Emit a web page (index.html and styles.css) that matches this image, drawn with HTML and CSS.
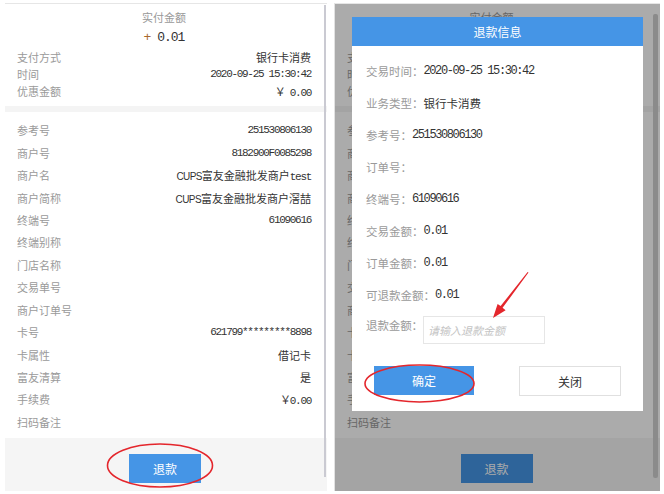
FILE: index.html
```html
<!DOCTYPE html>
<html lang="zh-CN">
<head>
<meta charset="utf-8">
<title>退款</title>
<link rel="stylesheet" href="styles.css">
</head>
<body>
<div class="page">
  <section class="screen">
    <div class="summary">
      <div class="paid-title">实付金额</div>
      <div class="paid-amount"><span class="plus">+</span> 0.01</div>
      <div class="row small"><span class="k">支付方式</span><span class="v">银行卡消费</span></div>
      <div class="row small"><span class="k">时间</span><span class="v num">2020-09-25 15:30:42</span></div>
      <div class="row small"><span class="k">优惠金额</span><span class="v num">￥ 0.00</span></div>
    </div>
    <div class="band"></div>
    <div class="details">
      <div class="row"><span class="k">参考号</span><span class="v num">251530806130</span></div>
      <div class="row"><span class="k">商户号</span><span class="v num">8182900F0085298</span></div>
      <div class="row"><span class="k">商户名</span><span class="v"><span class="narrow">CUPS</span>富友金融批发商户<span class="num">test</span></span></div>
      <div class="row"><span class="k">商户简称</span><span class="v"><span class="narrow">CUPS</span>富友金融批发商户滘喆</span></div>
      <div class="row"><span class="k">终端号</span><span class="v num">61090616</span></div>
      <div class="row"><span class="k">终端别称</span><span class="v"></span></div>
      <div class="row"><span class="k">门店名称</span><span class="v"></span></div>
      <div class="row"><span class="k">交易单号</span><span class="v"></span></div>
      <div class="row"><span class="k">商户订单号</span><span class="v"></span></div>
      <div class="row"><span class="k">卡号</span><span class="v num">621799*********8898</span></div>
      <div class="row"><span class="k">卡属性</span><span class="v">借记卡</span></div>
      <div class="row"><span class="k">富友清算</span><span class="v">是</span></div>
      <div class="row"><span class="k">手续费</span><span class="v num">￥0.00</span></div>
      <div class="row"><span class="k">扫码备注</span><span class="v"></span></div>
    </div>
    <div class="footer"><button class="btn-refund">退款</button></div>
    <div class="scrollbar"></div>
  </section>

  <section class="screen right">
    <div class="summary">
      <div class="paid-title">实付金额</div>
      <div class="paid-amount"><span class="plus">+</span> 0.01</div>
      <div class="row small"><span class="k">支付方式</span><span class="v">银行卡消费</span></div>
      <div class="row small"><span class="k">时间</span><span class="v num">2020-09-25 15:30:42</span></div>
      <div class="row small"><span class="k">优惠金额</span><span class="v num">￥ 0.00</span></div>
    </div>
    <div class="band"></div>
    <div class="details">
      <div class="row"><span class="k">参考号</span><span class="v num">251530806130</span></div>
      <div class="row"><span class="k">商户号</span><span class="v num">8182900F0085298</span></div>
      <div class="row"><span class="k">商户名</span><span class="v"><span class="narrow">CUPS</span>富友金融批发商户<span class="num">test</span></span></div>
      <div class="row"><span class="k">商户简称</span><span class="v"><span class="narrow">CUPS</span>富友金融批发商户滘喆</span></div>
      <div class="row"><span class="k">终端号</span><span class="v num">61090616</span></div>
      <div class="row"><span class="k">终端别称</span><span class="v"></span></div>
      <div class="row"><span class="k">门店名称</span><span class="v"></span></div>
      <div class="row"><span class="k">交易单号</span><span class="v"></span></div>
      <div class="row"><span class="k">商户订单号</span><span class="v"></span></div>
      <div class="row"><span class="k">卡号</span><span class="v num">621799*********8898</span></div>
      <div class="row"><span class="k">卡属性</span><span class="v">借记卡</span></div>
      <div class="row"><span class="k">富友清算</span><span class="v">是</span></div>
      <div class="row"><span class="k">手续费</span><span class="v num">￥0.00</span></div>
      <div class="row"><span class="k">扫码备注</span><span class="v"></span></div>
    </div>
    <div class="footer"><button class="btn-refund">退款</button></div>
    <div class="scrollbar wide"></div>
    <div class="mask"></div>

    <div class="modal">
      <div class="modal-head">退款信息</div>
      <div class="modal-body">
        <div class="mrow"><span class="mk">交易时间：</span><span class="mv num">2020-09-25 15:30:42</span></div>
        <div class="mrow"><span class="mk">业务类型：</span><span class="mv">银行卡消费</span></div>
        <div class="mrow"><span class="mk">参考号：</span><span class="mv num">251530806130</span></div>
        <div class="mrow"><span class="mk">订单号：</span><span class="mv"></span></div>
        <div class="mrow"><span class="mk">终端号：</span><span class="mv num">61090616</span></div>
        <div class="mrow"><span class="mk">交易金额：</span><span class="mv num">0.01</span></div>
        <div class="mrow"><span class="mk">订单金额：</span><span class="mv num">0.01</span></div>
        <div class="mrow"><span class="mk">可退款金额：</span><span class="mv num">0.01</span></div>
        <div class="input-row">
          <span class="mk input-label">退款金额：</span>
          <input class="amount-input" type="text" placeholder="请输入退款金额">
        </div>
        <div class="actions">
          <button class="btn-ok">确定</button>
          <button class="btn-close">关闭</button>
        </div>
      </div>
    </div>
  </section>
</div>

<svg class="annotations" width="664" height="494" viewBox="0 0 664 494">
  <ellipse cx="160" cy="465.5" rx="52.5" ry="21.5" fill="none" stroke="#e4262c" stroke-width="1.6"/>
  <ellipse cx="419.5" cy="383.5" rx="54.5" ry="18.5" fill="none" stroke="#e4262c" stroke-width="1.6"/>
  <polygon points="528.5,272.5 502.6,307.8 505.6,310.2 493,318 497.6,303.9 500.6,306.1 527.6,272" fill="#e4262c"/>
</svg>
</body>
</html>
```

FILE: styles.css
```css
* { box-sizing: border-box; }

body {
  margin: 0;
  background: #fff;
  position: relative;
  font-family: "Noto Sans CJK SC", "Liberation Sans", sans-serif;
  color: #333;
}

.page {
  display: flex;
  gap: 7px;
  padding: 3px 0 0 5px;
}

.screen {
  position: relative;
  width: 322px;
  height: 488px;
  background: #fff;
  border-top: 1px solid #e6e6e6;
  display: flex;
  flex-direction: column;
  overflow: hidden;
}

.screen.right {
  width: 326px;
  border-left: 1px solid #e2e2e2;
}

.summary {
  padding: 5px 16px 7px 12px;
}

.paid-title {
  text-align: center;
  font-size: 11px;
  line-height: 16px;
  color: #999;
}

.paid-amount {
  margin-top: 3px;
  text-align: center;
  font-family: "Liberation Mono", monospace;
  font-size: 13px;
  letter-spacing: -1px;
  line-height: 20px;
  color: #333;
}

.plus { color: #a8692c; }

.row {
  display: flex;
  justify-content: space-between;
  align-items: center;
  height: 22.45px;
  font-size: 11px;
}

.row.small { height: 17px; }

.k { color: #9a9a9a; }
.v { color: #333; white-space: nowrap; }

.num {
  font-family: "Liberation Mono", "Noto Sans CJK SC", monospace;
  letter-spacing: -1.3px;
}

.narrow {
  font-family: "Liberation Sans", sans-serif;
  font-size: 10px;
  letter-spacing: -0.6px;
}

.band {
  height: 6px;
  background: #f4f4f4;
}

.details {
  padding: 7px 16px 5px 12px;
}

.screen.right .summary,
.screen.right .details {
  padding-right: 24px;
}

.footer {
  margin-top: auto;
  height: 53px;
  background: #f5f5f5;
  display: flex;
  justify-content: center;
  padding-top: 16px;
  padding-right: 2px;
}

.btn-refund {
  width: 72px;
  height: 29px;
  border: none;
  background: #4595e6;
  color: #fff;
  font-family: "Noto Sans CJK SC", sans-serif;
  font-size: 12px;
  padding: 0;
}

.scrollbar {
  position: absolute;
  left: 319px;
  top: 1px;
  width: 2px;
  height: 472px;
  background: #cacad2;
}

.scrollbar.wide {
  left: 318px;
  top: 10px;
  width: 5px;
  height: 464px;
  background: #cfcfcf;
  border-radius: 2px;
}

.mask {
  position: absolute;
  inset: 0;
  background: rgba(0, 0, 0, 0.33);
}

.modal {
  position: absolute;
  left: 17px;
  top: 13px;
  width: 291px;
  background: #fff;
}

.modal-head {
  height: 29px;
  background: #4595e6;
  color: #fff;
  font-size: 12px;
  line-height: 29px;
  text-align: center;
}

.modal-body {
  padding: 9px 14px 15px 14px;
}

.mrow {
  display: flex;
  align-items: center;
  height: 32px;
  font-size: 11.5px;
}

.mk { color: #9a9a9a; white-space: nowrap; }
.mv { color: #333; }

.mv.num {
  letter-spacing: -1.4px;
  font-size: 12px;
}

.input-row {
  display: flex;
  align-items: flex-start;
  margin-top: 5px;
  height: 28px;
}

.input-label {
  flex: none;
  font-size: 11.5px;
  line-height: 18px;
  width: 57px;
  letter-spacing: -0.1px;
}

.amount-input {
  flex: none;
  width: 122px;
  height: 28px;
  border: 1px solid #e6e6e6;
  padding: 0 4px;
  font-family: "Noto Sans CJK SC", sans-serif;
  font-size: 11px;
  outline: none;
}

.amount-input::placeholder {
  color: #c4c4c4;
  font-style: italic;
}

.actions {
  display: flex;
  justify-content: space-between;
  margin-top: 22px;
  padding: 0 8px;
}

.btn-ok {
  width: 100px;
  height: 29px;
  border: none;
  background: #4595e6;
  color: #fff;
  font-family: "Noto Sans CJK SC", sans-serif;
  font-size: 12px;
  padding: 0;
}

.btn-close {
  width: 102px;
  height: 30px;
  border: 1px solid #e0e0e0;
  background: #fff;
  color: #333;
  font-family: "Noto Sans CJK SC", sans-serif;
  font-size: 12px;
  padding: 0;
}

.annotations {
  position: absolute;
  left: 0;
  top: 0;
  pointer-events: none;
}
```
